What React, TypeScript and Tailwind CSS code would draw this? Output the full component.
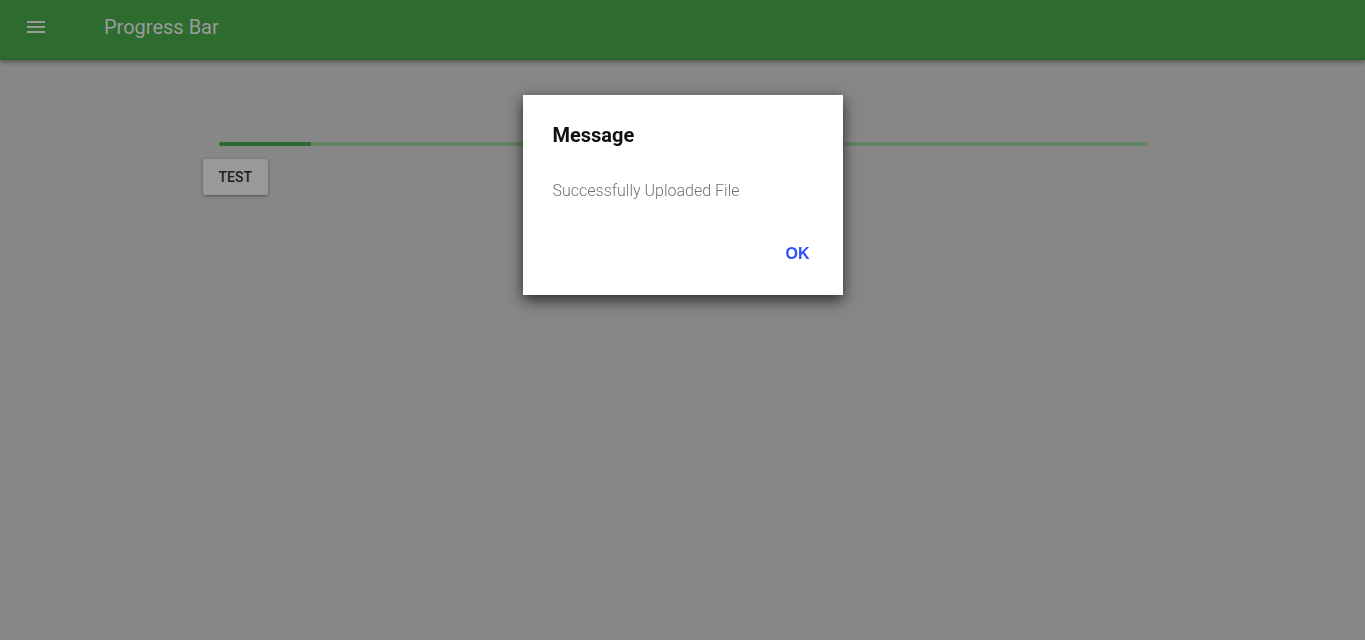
export default function App() {
  return (
    <div className="min-h-screen bg-[#878787] font-[Roboto,sans-serif]">
      <header className="flex h-15 items-center border-b border-[#295f2b] bg-[#2e6b2f] px-6 pb-[5px] text-[#9b9b9b] shadow-[0_2px_5px_rgba(0,0,0,0.4)]">
        <button type="button" aria-label="Open menu" className="mr-14">
          <svg viewBox="0 0 24 24" className="size-6 fill-current" aria-hidden="true">
            <path d="M3 18h18v-2H3v2zm0-5h18v-2H3v2zm0-7v2h18V6H3z" />
          </svg>
        </button>
        <h1 className="text-xl font-normal">Progress Bar</h1>
      </header>

      <main className="mx-auto max-w-[960px] pt-[82px]">
        <div
          role="progressbar"
          aria-label="Upload progress"
          aria-valuenow={10}
          aria-valuemin={0}
          aria-valuemax={100}
          className="mx-4 h-1 overflow-hidden rounded-sm bg-[#648467]"
        >
          <div className="h-full w-1/10 bg-[#2e6b2f]" />
        </div>
        <button
          type="button"
          className="mt-[13px] h-9 rounded-xs bg-[#999] px-4 text-sm font-medium text-[#1c1c1c] shadow-[0_1px_3px_rgba(0,0,0,0.4)]"
        >
          TEST
        </button>
      </main>

      <div
        role="dialog"
        aria-modal="true"
        aria-labelledby="message-title"
        className="fixed inset-x-0 top-[95px] mx-auto flex min-h-[200px] w-80 flex-col bg-white px-[30px] pt-[25px] pb-[23px] shadow-[0_5px_14px_rgba(0,0,0,0.7)]"
      >
        <h2 id="message-title" className="text-xl leading-[30px] font-bold text-[#111]">Message</h2>
        <p className="mt-[29px] text-base leading-6 font-light text-[#737373]">Successfully Uploaded File</p>
        <button
          type="button"
          className="mt-auto self-end px-[3px] py-1.5 font-['Liberation_Sans',sans-serif] text-base leading-6 font-bold text-[#304ffe]"
        >
          OK
        </button>
      </div>
    </div>
  );
}
